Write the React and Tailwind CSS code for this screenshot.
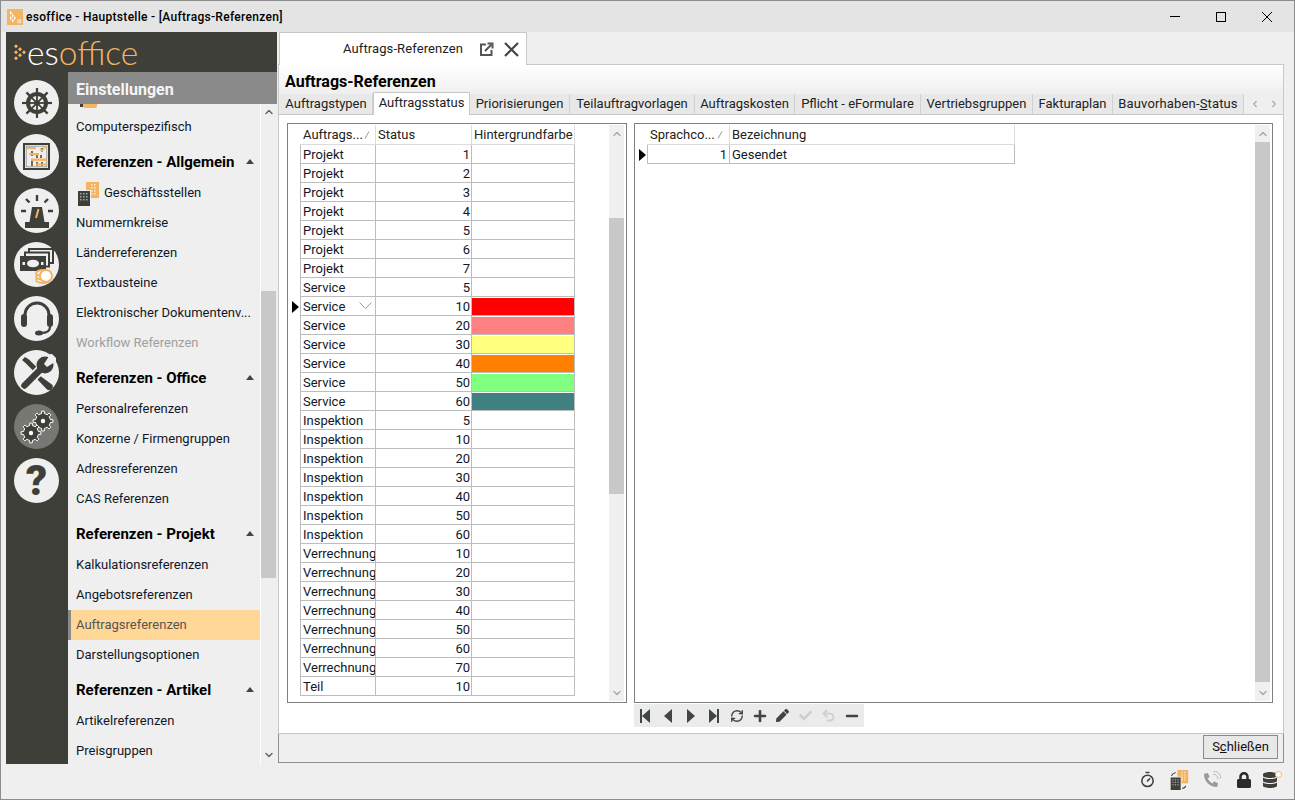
import React from 'react';
import { FaLock, FaDatabase, FaPen, FaCheck, FaPlus, FaMinus, FaPhoneAlt } from 'react-icons/fa';
import { ChevronUp, ChevronDown, ChevronLeft, ChevronRight, RefreshCw, Undo2, Timer } from 'lucide-react';

const DK = '#3f3f3a';
const OR = '#f5b461';

function Diamonds({ c = OR, s = 12 }) {
  return (
    <svg width={s} height={s * 1.55} viewBox="0 0 12 18">
      {[[1,1],[1,7],[1,13],[5,4],[5,10],[9,7]].map(([x,y],i)=>(
        <path key={i} d={`M${x} ${y}l2 2l-2 2l-2-2z`} transform="translate(1 0)" fill={c}/>
      ))}
    </svg>
  );
}

function Building({ size = 24, arrows }) {
  return (
    <svg width={size} height={size} viewBox="0 0 24 24">
      <rect x="10" y="0" width="13" height="16" fill={OR}/>
      {[2,5,8,11].map(y=>[15,18].map(x=><rect key={x+'-'+y} x={x} y={y} width="1.600" height="1.600" fill="#ffe6c0"/>))}
      <rect x="1" y="8" width="14" height="16" fill="#efefef"/>
      <rect x="2" y="9" width="12" height="15" fill={DK}/>
      {[11,14,17].map(y=>[4,7,10].map(x=><rect key={x+'-'+y} x={x} y={y} width="1.500" height="1.500" fill="#a8a8a4"/>))}
      {arrows && <path d="M3 7q1-3 5-4M20 19q-1 3-4 3" fill="none" stroke={DK} strokeWidth="1.400"/>}
    </svg>
  );
}

function Wheel() {
  const spokes = [0,45,90,135];
  return (
    <svg width="32" height="32" viewBox="0 0 32 32">
      {spokes.map(a=><path key={a} d="M16 1v30" stroke={DK} strokeWidth="2.200" transform={`rotate(${a} 16 16)`} />)}
      <circle cx="16" cy="16" r="9" fill="#efefef" stroke={DK} strokeWidth="4"/>
      {spokes.map(a=><path key={a} d="M16 7v18" stroke={DK} strokeWidth="1.800" transform={`rotate(${a} 16 16)`} />)}
      <circle cx="16" cy="16" r="2.800" fill={DK}/>
    </svg>
  );
}

function Planner() {
  return (
    <svg width="27" height="27" viewBox="0 0 27 27">
      <rect x="1" y="1" width="25" height="25" fill="none" stroke={DK} strokeWidth="2"/>
      <rect x="3.200" y="3.200" width="20.600" height="20.600" fill="none" stroke="#8b8b87" strokeWidth=".8"/>
      <path d="M9 8v5M9 16v7M14 12v3M19 5v4M18 12v3M14 19v4M19 19v4" stroke={DK} strokeWidth="1.500" fill="none"/>
      <rect x="4" y="4" width="9" height="2.200" fill={OR}/>
      <rect x="6" y="10" width="10" height="2.200" fill={OR}/>
      <rect x="8" y="15.500" width="16" height="2.400" fill={OR}/>
      <rect x="13" y="20.500" width="10" height="2" fill={OR}/>
      <path d="M17 6l2 2l4-5" stroke={OR} strokeWidth="1.800" fill="none"/>
    </svg>
  );
}

function Siren() {
  return (
    <svg width="36" height="34" viewBox="0 0 36 34">
      <path d="M13 13H23L25.500 28H10.500z" fill={DK}/>
      <rect x="6" y="28" width="24" height="6" fill={DK}/>
      <path d="M19.500 15l-2.500 9" stroke={OR} strokeWidth="2"/>
      <path d="M18 1v6M7 5l3.500 3.500M29 5l-3.500 3.500M2 17h5M29 17h5" stroke={DK} strokeWidth="2.400"/>
    </svg>
  );
}

function Money() {
  return (
    <svg width="36" height="38" viewBox="0 0 36 38">
      <rect x="10" y="3" width="24" height="14" fill="#efefef" stroke={DK} strokeWidth="2"/>
      <rect x="6" y="6.500" width="24" height="14" fill="#efefef" stroke={DK} strokeWidth="2"/>
      <rect x="1" y="10" width="26" height="15" fill={DK}/>
      <ellipse cx="14" cy="17.500" rx="6" ry="3.800" fill="#efefef"/>
      <rect x="3.500" y="16" width="2.500" height="3" fill="#efefef"/>
      <rect x="22" y="16" width="2.500" height="3" fill="#efefef"/>
      <g fill="#efefef" stroke={OR} strokeWidth="1.800">
        <ellipse cx="24" cy="34" rx="7" ry="3"/>
        <ellipse cx="24" cy="30.500" rx="7" ry="3"/>
        <ellipse cx="24" cy="27" rx="7" ry="3"/>
        <circle cx="27" cy="30" r="6" fill="#fff"/>
      </g>
    </svg>
  );
}

function Headset() {
  return (
    <svg width="34" height="36" viewBox="0 0 34 36">
      <path d="M5 18v-4a12 12 0 0 1 24 0v4" fill="none" stroke={DK} strokeWidth="3"/>
      <rect x="1" y="13" width="6" height="13" rx="3" fill={DK}/>
      <rect x="27" y="13" width="6" height="13" rx="3" fill={DK}/>
      <path d="M30 26q0 6-9 6" fill="none" stroke={DK} strokeWidth="2.200"/>
      <ellipse cx="19" cy="32" rx="4" ry="2.500" fill={DK}/>
    </svg>
  );
}

function Tools() {
  return (
    <svg width="38" height="38" viewBox="0 0 38 38">
      <path d="M4 6l3-3 4 2.500 9 9-3.500 3.500-9-9z" fill={DK}/>
      <path d="M21 21l13.500 10q1 3-1 4.500-2 1.500-4.500 0L18 24z" fill={DK}/>
      <path d="M6 32L24 14" stroke="#efefef" strokeWidth="10"/>
      <path d="M6.500 31.500L24 14" stroke={DK} strokeWidth="6.500" strokeLinecap="round"/>
      <circle cx="27" cy="11" r="8.500" fill={DK}/>
      <path d="M26 10L33 -1L40 6L29 13z" fill="#efefef"/>
    </svg>
  );
}

function gearPath(cx, cy, R, r, n = 8) {
  let d = '';
  const step = (Math.PI * 2) / n;
  for (let i = 0; i < n; i++) {
    const a = i * step;
    const p = [
      [r, a - step * 0.5],
      [r, a - step * 0.24],
      [R, a - step * 0.16],
      [R, a + step * 0.16],
      [r, a + step * 0.24],
    ];
    p.forEach(([rr, t], j) => {
      d += `${i === 0 && j === 0 ? 'M' : 'L'}${(cx + rr * Math.cos(t)).toFixed(2)} ${(cy + rr * Math.sin(t)).toFixed(2)}`;
    });
  }
  return d + 'Z';
}

function Gears() {
  return (
    <svg width="34" height="34" viewBox="0 0 34 34">
      <path d={gearPath(23, 11, 10, 7.500)} fill={DK} stroke="#fff" strokeWidth="1"/>
      <circle cx="23" cy="11" r="2.200" fill="#fff"/>
      <path d={gearPath(11, 23, 10, 7.500)} fill={DK} stroke="#fff" strokeWidth="1"/>
      <circle cx="11" cy="23" r="2.200" fill="#fff"/>
    </svg>
  );
}

function Circle({ children, active }) {
  return (
    <div className={`w-[45px] h-[45px] rounded-full flex items-center justify-center ${active ? 'bg-[#777773]' : 'bg-[#efefef]'}`}>
      {children}
    </div>
  );
}

function Item({ label, muted, selected, icon }) {
  return (
    <div className={`h-[30px] flex items-center text-[13px] whitespace-nowrap ${selected ? 'bg-[#ffd797] border-l-[3px] border-[#8a8a8a] pl-[5px] text-[#555]' : 'pl-[8px]'} ${muted ? 'text-[#a0a0a0]' : selected ? '' : 'text-[#101828]'}`}>
      {icon}
      {label}
    </div>
  );
}

function Section({ label }) {
  return (
    <div className="h-[36px] pt-[10px] pl-[8px] pr-[6px] flex justify-between items-start">
      <span className="text-[15px] leading-[20px] font-bold text-black whitespace-nowrap">{label}</span>
      <span className="mt-[7px] w-0 h-0 border-x-[4px] border-x-transparent border-b-[5px] border-b-[#444]" />
    </div>
  );
}

const TABS = [
  ['Auftragstypen', 93],
  ['Auftragsstatus', 97, true],
  ['Priorisierungen', 100],
  ['Teilauftragvorlagen', 125],
  ['Auftragskosten', 100],
  ['Pflicht - eFormulare', 126],
  ['Vertriebsgruppen', 112],
  ['Fakturaplan', 80],
];

const ROWS = [
  ...[1,2,3,4,5,6,7].map(n=>['Projekt',n]),
  ['Service',5],['Service',10,'#ff0000'],['Service',20,'#ff8080'],['Service',30,'#ffff80'],['Service',40,'#ff8000'],['Service',50,'#80ff80'],['Service',60,'#408080'],
  ...[5,10,20,30,40,50,60].map(n=>['Inspektion',n]),
  ...[10,20,30,40,50,60,70].map(n=>['Verrechnung',n]),
  ['Teil',10],
];

function SortMark() {
  return <svg width="6" height="8" viewBox="0 0 6 8" className="shrink-0"><path d="M1 7.500L5 .5" stroke="#999" fill="none"/></svg>;
}

function Indicator() {
  return <span className="block w-0 h-0 border-y-[6px] border-y-transparent border-l-[7px] border-l-black" />;
}

function Scroll({ thumbTop, thumbH }) {
  return (
    <div className="w-[15px] h-full flex flex-col items-center bg-[#f0f0f0]">
      <div className="h-[17px] flex items-center justify-center shrink-0"><ChevronUp size={12} color="#aaa" strokeWidth={3}/></div>
      <div className="flex-1 w-full">
        <div style={{ marginTop: thumbTop, height: thumbH }} className="w-full bg-[#c8c8c8]" />
      </div>
      <div className="h-[17px] flex items-center justify-center shrink-0"><ChevronDown size={12} color="#aaa" strokeWidth={3}/></div>
    </div>
  );
}

function Nav({ children }) {
  return <div className="w-[23px] h-[23px] flex items-center justify-center">{children}</div>;
}

function Tri({ dir }) {
  return dir === 'l'
    ? <span className="w-0 h-0 border-y-[7px] border-y-transparent border-r-[8px] border-r-[#3f4545]" />
    : <span className="w-0 h-0 border-y-[7px] border-y-transparent border-l-[8px] border-l-[#3f4545]" />;
}

function StatusSlot({ w, children }) {
  return <div style={{ width: w }} className="flex justify-center items-center">{children}</div>;
}

export default function App() {
  return (
    <div className="w-[1295px] h-[800px] overflow-hidden border border-[#8c8c8c] bg-[#efefef] flex flex-col text-[13px] text-[#101828]" style={{ fontFamily: 'Roboto, sans-serif' }}>
      {/* title bar */}
      <div className="h-[31px] shrink-0 bg-[#e4e4e4] flex items-center pl-[6px]">
        <div className="w-[16px] h-[16px] bg-[#f5b461] flex items-center justify-center mr-[3px]">
          <svg width="14" height="14" viewBox="0 0 14 14"><path d="M2 1l2 2-2 2zM2 6l2 2-2 2zM4 3.500l2 2-2 2zM4 8.500l2 2-2 2zM6 6l2 2-2 2z" fill="#fff"/><rect x="10" y="10" width="2.500" height="2.500" fill="none" stroke="#fff" strokeWidth=".8"/></svg>
        </div>
        <span className="text-[12px] font-medium text-black tracking-[0.3px]">esoffice - Hauptstelle - [Auftrags-Referenzen]</span>
        <div className="ml-auto flex items-center">
          <div className="w-[46px] flex justify-center"><div className="w-[10px] h-px bg-black" /></div>
          <div className="w-[46px] flex justify-center"><div className="w-[10px] h-[10px] border border-black" /></div>
          <div className="w-[46px] flex justify-center mr-[-1px]">
            <svg width="10" height="10" viewBox="0 0 10 10"><path d="M0 0l10 10M10 0L0 10" stroke="#000" fill="none"/></svg>
          </div>
          <div className="w-[5px]" />
        </div>
      </div>

      {/* body */}
      <div className="flex h-[732px] shrink-0 pl-[5px]">
        {/* left navigation */}
        <div className="w-[271px] shrink-0 flex flex-col">
          <div className="h-[40px] shrink-0 bg-[#3f3f3a] flex items-center pl-[8px]">
            <Diamonds />
            <span className="text-[33.500px] leading-[38px] font-light ml-[1px]" style={{ fontFamily: 'Lato, sans-serif' }}>
              <span className="text-white">es</span><span className="text-[#f5b461]">office</span>
            </span>
          </div>
          <div className="flex flex-1 min-h-0">
            <div className="w-[62px] shrink-0 bg-[#3f3f3a] pt-[8px] pl-[8px] flex flex-col gap-[9px]">
              <Circle><Wheel /></Circle>
              <Circle><Planner /></Circle>
              <Circle><Siren /></Circle>
              <Circle><Money /></Circle>
              <Circle><Headset /></Circle>
              <Circle><Tools /></Circle>
              <Circle active><Gears /></Circle>
              <Circle><span className="text-[42px] leading-none font-black text-[#3f3f3a]">?</span></Circle>
            </div>
            <div className="flex-1 flex flex-col min-w-0">
              <div className="h-[32px] shrink-0 bg-[#8a8a8a] flex items-center pl-[8px] pt-[3px] text-[16px] font-bold text-[#f5f5f5]">Einstellungen</div>
              <div className="flex-1 flex min-h-0">
                <div className="w-[192px] overflow-hidden">
                  <div className="h-[8px] overflow-hidden pl-[12px] flex">
                    <div className="w-[3px] h-[3px] bg-[#3f3f3a]" />
                    <div className="w-[14px] h-[4px] bg-[#f5b461] rounded-b-[2px]" />
                  </div>
                  <Item label="Computerspezifisch" />
                  <Section label="Referenzen - Allgemein" />
                  <Item label="Geschäftsstellen" icon={<span className="mr-[4px] mt-[1px] flex"><Building size={24}/></span>} />
                  <Item label="Nummernkreise" />
                  <Item label="Länderreferenzen" />
                  <Item label="Textbausteine" />
                  <Item label="Elektronischer Dokumentenv..." />
                  <Item label="Workflow Referenzen" muted />
                  <Section label="Referenzen - Office" />
                  <Item label="Personalreferenzen" />
                  <Item label="Konzerne / Firmengruppen" />
                  <Item label="Adressreferenzen" />
                  <Item label="CAS Referenzen" />
                  <Section label="Referenzen - Projekt" />
                  <Item label="Kalkulationsreferenzen" />
                  <Item label="Angebotsreferenzen" />
                  <Item label="Auftragsreferenzen" selected />
                  <Item label="Darstellungsoptionen" />
                  <Section label="Referenzen - Artikel" />
                  <Item label="Artikelreferenzen" />
                  <Item label="Preisgruppen" />
                </div>
                <div className="w-[17px] border-l border-white h-full flex flex-col items-center">
                  <div className="h-[16px] flex items-center justify-center"><ChevronUp size={12} color="#666" strokeWidth={3}/></div>
                  <div className="flex-1 w-[15px] ml-[-1px]">
                    <div className="mt-[171px] h-[287px] bg-[#c8c8c8]" />
                  </div>
                  <div className="h-[16px] flex items-center justify-center mb-[1px]"><ChevronDown size={12} color="#666" strokeWidth={3}/></div>
                </div>
              </div>
            </div>
          </div>
        </div>

        {/* main */}
        <div className="w-[1006px] shrink-0 ml-[1px] flex flex-col">
          <div className="h-[32px] shrink-0 flex pl-[1px]">
            <div className="w-[248px] h-[33px] bg-white border-t border-x border-[#c8c8c8] z-10 flex items-center pl-[63px] text-[13px] tracking-[0.1px] text-[#222]">
              Auftrags-Referenzen
              <svg width="15" height="15" viewBox="0 0 15 15" className="ml-[16px]">
                <path d="M7 2.500H2v10.500h10.500V8" fill="none" stroke="#555" strokeWidth="2"/>
                <path d="M6 9L12 3M8.500 1.500H13.500V6.500" fill="none" stroke="#555" strokeWidth="2"/>
              </svg>
              <svg width="15" height="15" viewBox="0 0 15 15" className="ml-[10px]">
                <path d="M1 1L14 14M14 1L1 14" stroke="#444" strokeWidth="2.200" fill="none"/>
              </svg>
            </div>
          </div>
          <div className="h-[670px] shrink-0 border border-[#c8c8c8] bg-white flex flex-col">
            <div className="h-[29px] shrink-0 bg-gradient-to-b from-white to-[#efefef] flex items-end pl-[6px] pb-[2px] text-[16px] font-bold text-black leading-[20px]">Auftrags-Referenzen</div>
            <div className="h-[21px] shrink-0 bg-[#efefef] flex pl-[1px] border-b border-[#c8c8c8] items-end relative">
              {TABS.map(([t,w,a])=>(
                <div key={t} style={{ width: w }} className={a ? 'h-[23px] bg-white border-t border-x border-[#c8c8c8] relative -mb-px flex items-center justify-center pb-[2px] text-[#222]' : 'h-[20px] bg-[#e8e8e8] border-r border-[#d0d0d0] flex items-center justify-center text-[#222]'}>{t}</div>
              ))}
              <div style={{ width: 131 }} className="h-[20px] bg-[#e8e8e8] border-r border-[#d0d0d0] flex items-center justify-center text-[#222] tracking-[0.15px]">
                <span>Bauvorhaben-<span className="underline">S</span>tatus</span>
              </div>
              <ChevronLeft size={10} color="#aaa" strokeWidth={3} className="ml-[6px] mb-[5px]" />
              <ChevronRight size={10} color="#aaa" strokeWidth={3} className="ml-[9px] mb-[5px]" />
            </div>
            <div className="flex-1 flex flex-col min-h-0 px-[8px] pt-[8px]">
              <div className="h-[580px] shrink-0 flex gap-[7px]">
                {/* left grid */}
                <div className="w-[340px] h-full border border-[#808080] flex pt-px pl-px pr-[2px] pb-px">
                  <div className="w-[322px] h-full overflow-hidden pl-[1px] text-[13px]">
                    <div className="flex h-[20px]">
                      <div className="w-[10px]" />
                      <div className="w-[76px] flex items-center pl-[3px] gap-[1px] border-r border-b border-[#dcdcdc] text-[#222]">Auftrags...<SortMark /></div>
                      <div className="w-[96px] flex items-center pl-[2px] border-r border-b border-[#dcdcdc] text-[#222]">Status</div>
                      <div className="w-[103px] flex items-center pl-[2px] border-r border-b border-[#dcdcdc] text-[#222]">Hintergrundfarbe</div>
                    </div>
                    {ROWS.map(([a,b,c],i)=>{
                      const sel = i === 8;
                      return (
                        <div key={i} className="flex h-[19px]">
                          <div className="w-[10px] flex items-center">{sel && <span className="ml-[2px]"><Indicator /></span>}</div>
                          <div className="w-[76px] border-x border-b border-[#bdbdbd] pl-[2px] pt-px overflow-hidden whitespace-nowrap flex items-center justify-between pr-[2px]">
                            {a}
                            {sel && <svg width="13" height="7" viewBox="0 0 13 7" className="mr-[1px] -mt-[3px]"><path d="M.5.5l6 6 6-6" stroke="#999" fill="none"/></svg>}
                          </div>
                          <div className="w-[96px] border-r border-b border-[#bdbdbd] pr-[1px] pt-px flex items-center justify-end">{b}</div>
                          <div className="w-[103px] border-r border-b border-[#bdbdbd] pt-px">
                            <div className="h-full w-full" style={{ backgroundColor: c || 'transparent' }} />
                          </div>
                        </div>
                      );
                    })}
                  </div>
                  <div className="ml-auto h-full"><Scroll thumbTop={76} thumbH={276} /></div>
                </div>
                {/* right grid */}
                <div className="w-[639px] h-full border border-[#808080] flex pt-px pl-px pr-[2px] pb-px">
                  <div className="flex-1 h-full text-[13px]">
                    <div className="flex h-[20px]">
                      <div className="w-[11px]" />
                      <div className="w-[83px] flex items-center pl-[3px] gap-[2px] border-r border-b border-[#dcdcdc] text-[#222]">Sprachco...<SortMark /></div>
                      <div className="w-[285px] flex items-center pl-[2px] border-r border-b border-[#dcdcdc] text-[#222]">Bezeichnung</div>
                    </div>
                    <div className="flex h-[19px]">
                      <div className="w-[11px] flex items-center pl-[3px]"><Indicator /></div>
                      <div className="w-[83px] border-x border-b border-[#bdbdbd] pr-[2px] pt-px flex items-center justify-end">1</div>
                      <div className="w-[285px] border-r border-b border-[#bdbdbd] pl-[2px] pt-px flex items-center">Gesendet</div>
                    </div>
                  </div>
                  <Scroll thumbTop={0} thumbH={540} />
                </div>
              </div>
              {/* toolbar */}
              <div className="flex mt-px pl-[347px]">
                <div className="h-[23px] bg-[#ebebeb] flex w-[230px] pr-[1px]">
                  <Nav><span className="w-[2px] h-[14px] bg-[#3f4545]" /><Tri dir="l" /></Nav>
                  <Nav><Tri dir="l" /></Nav>
                  <Nav><Tri dir="r" /></Nav>
                  <Nav><Tri dir="r" /><span className="w-[2px] h-[14px] bg-[#3f4545]" /></Nav>
                  <Nav><RefreshCw size={14} color="#3f4545" strokeWidth={2.4} /></Nav>
                  <Nav><FaPlus size={14} color="#3f4545" /></Nav>
                  <Nav><FaPen size={13} color="#3f4545" /></Nav>
                  <Nav><FaCheck size={13} color="#cfcfcf" /></Nav>
                  <Nav><Undo2 size={15} color="#cfcfcf" strokeWidth={3} /></Nav>
                  <Nav><FaMinus size={14} color="#3f4545" /></Nav>
                </div>
              </div>
            </div>
          </div>
          <div className="h-[29px] shrink-0 border-x border-b border-[#8f8f8f] flex justify-end items-center pr-[5px] pb-[2px]">
            <button className="w-[75px] h-[24px] bg-[#e8e8e8] border border-[#8a8a8a] text-[13px] text-[#111]">S<span className="underline">c</span>hließen</button>
          </div>
        </div>
      </div>

      {/* status bar */}
      <div className="flex-1 flex items-center justify-end pr-[11px] pb-[4px]">
        <StatusSlot w={30}><Timer size={17} color={DK} strokeWidth={2.2} /></StatusSlot>
        <span className="w-[2px]" />
        <StatusSlot w={30}><Building size={20} arrows /></StatusSlot>
        <span className="w-[2px]" />
        <StatusSlot w={30}>
          <span className="relative flex">
            <FaPhoneAlt size={14} color="#9a9a9a" />
            <svg width="9" height="9" viewBox="0 0 9 9" className="absolute -top-[2px] -right-[3px]"><path d="M1 3q4 0 5 5M1 0q7 0 8 8" stroke="#bbb" fill="none"/></svg>
          </span>
        </StatusSlot>
        <span className="w-[5px]" />
        <StatusSlot w={26}><FaLock size={16} color="#2b2b2b" /></StatusSlot>
        <StatusSlot w={26}>
          <span className="relative flex">
            <FaDatabase size={16} color={DK} />
            <span className="absolute -top-[1px] -right-[4px] w-[7px] h-[7px] rounded-full bg-white border border-[#f5b461]" />
          </span>
        </StatusSlot>
      </div>
    </div>
  );
}
